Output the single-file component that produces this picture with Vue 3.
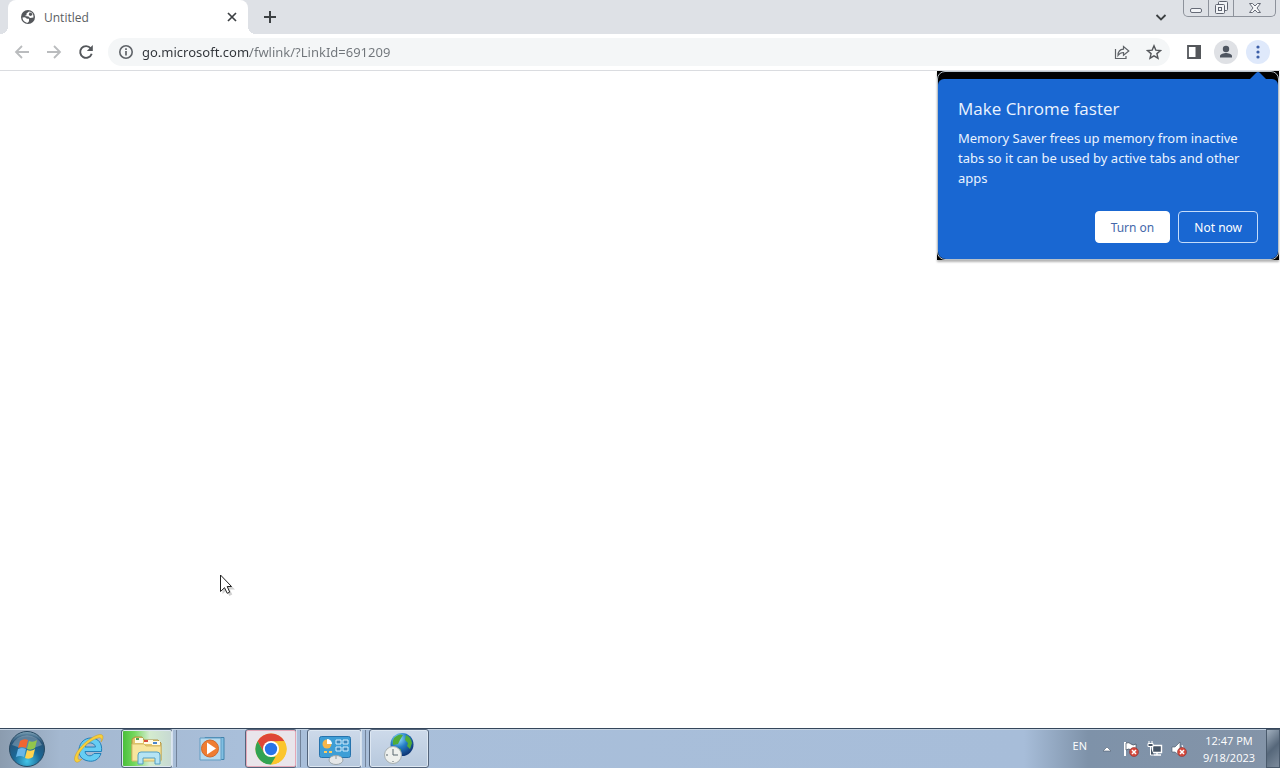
<script setup>
import { ref } from 'vue';

const address = ref('go.microsoft.com/fwlink/?LinkId=691209');
const showPromo = ref(true);

const closePromo = () => {
  showPromo.value = false;
}
</script>

<template>
  <div class="desktop">
    <header class="tabstrip">
      <div class="tab">
        <svg class="globe" width="16" height="16" viewBox="0 0 16 16">
          <circle cx="8" cy="8" r="7" fill="#54575b" />
          <path d="M2.500 8.500L5 8.300l2 1.500h2v2.400l-1.200 1.600C5 13.700 2.500 11.500 2.500 8.500zM9 2.600L6.500 4.500v1.700L4.500 7l4 .5L10 9l3.500-.5C13.800 5 12 3 9 2.600z" fill="#fff" />
          <path d="M9.500 3.500l2 .3 1 2.200-2 1-1.800-1z" fill="#54575b" />
        </svg>
        <span class="tab-title">Untitled</span>
        <button class="icon-btn" aria-label="Close tab">
          <svg width="16" height="16" viewBox="0 0 16 16"><path d="M4 4l8 8M12 4l-8 8" stroke="#3c4043" stroke-width="1.7" /></svg>
        </button>
      </div>
      <button class="icon-btn new-tab" aria-label="New tab">
        <svg width="16" height="16" viewBox="0 0 16 16"><path d="M8 2v12M2 8h12" stroke="#3c4043" stroke-width="2" /></svg>
      </button>
      <button class="icon-btn tab-search" aria-label="Search tabs">
        <svg width="16" height="16" viewBox="0 0 16 16"><path d="M3.5 6l4.5 4.5L12.5 6" fill="none" stroke="#3c4043" stroke-width="1.8" /></svg>
      </button>
      <div class="window-controls">
        <button aria-label="Minimize">
          <svg width="14" height="14" viewBox="0 0 14 14"><rect x="1.5" y="8.500" width="11" height="4" rx="1.5" fill="#f2f4f7" stroke="#666b77" /></svg>
        </button>
        <button aria-label="Restore">
          <svg width="14" height="15" viewBox="0 0 14 15" fill="#f2f4f7" stroke="#5f6470">
            <rect x="4.5" y="1.5" width="9" height="9" rx="1" />
            <rect x="1.5" y="4.5" width="9" height="9" rx="1" />
            <rect x="4.5" y="7.5" width="3" height="3" />
          </svg>
        </button>
        <button class="wide" aria-label="Close window">
          <svg width="14" height="15" viewBox="0 0 14 15"><path d="M1.5 3.500h3L7 6l2.500-2.500h3L9 8l3.500 4.500h-3L7 10l-2.500 2.500h-3L5 8z" fill="#f7f8fa" stroke="#666b77" /></svg>
        </button>
      </div>
    </header>

    <nav class="toolbar">
      <button class="icon-btn" aria-label="Back">
        <svg width="16" height="16" viewBox="0 0 16 16"><path d="M15 8H2M8 2L2 8l6 6" fill="none" stroke="#babcbe" stroke-width="1.8" /></svg>
      </button>
      <button class="icon-btn" aria-label="Forward">
        <svg width="16" height="16" viewBox="0 0 16 16"><path d="M1 8h13M8 2l6 6-6 6" fill="none" stroke="#babcbe" stroke-width="1.8" /></svg>
      </button>
      <button class="icon-btn" aria-label="Reload">
        <svg width="16" height="16" viewBox="0 0 16 16">
          <path d="M12.700 4.300A5.900 5.900 0 1 0 13.700 9.800" fill="none" stroke="#54575b" stroke-width="1.9" />
          <path d="M14.800 1v6H8.800z" fill="#54575b" />
        </svg>
      </button>
      <div class="omnibox">
        <svg width="16" height="16" viewBox="0 0 16 16">
          <circle cx="8" cy="8" r="6.200" fill="none" stroke="#5f6368" stroke-width="1.6" />
          <path d="M8 7v4.500M8 4.300v1.600" stroke="#5f6368" stroke-width="1.7" />
        </svg>
        <input v-model="address" type="text" aria-label="Address" spellcheck="false">
        <button class="icon-btn" aria-label="Share">
          <svg width="16" height="16" viewBox="0 0 16 16" fill="none" stroke="#5f6368" stroke-width="1.2">
            <path d="M1.500 5v9.500H12V12" />
            <path d="M4 11.500C4 7.500 6 5.500 9.500 5.200V2.500L14.800 7l-5.300 4.200V8.500C7 8.500 5.500 9.300 4 11.500z" />
          </svg>
        </button>
        <button class="icon-btn" aria-label="Bookmark">
          <svg width="16" height="16" viewBox="0 0 16 16"><path d="M8 1.800l1.800 4.300 4.700.4-3.600 3.100 1.100 4.600L8 11.800l-4 2.400 1.100-4.600-3.600-3.100 4.700-.4z" fill="none" stroke="#54575b" stroke-width="1.4" /></svg>
        </button>
      </div>
      <div class="actions">
        <button class="round-btn" aria-label="Side panel">
          <svg width="16" height="16" viewBox="0 0 16 16"><path d="M2 2h12v12H2z" fill="#fff" stroke="#54575b" stroke-width="1.8" /><path d="M9.500 1H15v14H9.500z" fill="#54575b" /></svg>
        </button>
        <button class="round-btn profile" aria-label="Profile">
          <svg width="16" height="16" viewBox="0 0 16 16" fill="#4f5661"><circle cx="8" cy="5" r="3.200" /><path d="M2 13.500V12c0-2 4-3 6-3s6 1 6 3v1.500z" /></svg>
        </button>
        <button class="round-btn menu" aria-label="Menu">
          <svg width="16" height="16" viewBox="0 0 16 16" fill="#3c5fa8"><circle cx="8" cy="3" r="1.600" /><circle cx="8" cy="8" r="1.600" /><circle cx="8" cy="13" r="1.600" /></svg>
        </button>
      </div>
    </nav>

    <main class="page">
      <section v-if="showPromo" class="promo">
        <svg class="promo-arrow" width="18" height="9" viewBox="0 0 18 9"><path d="M0 9l7-7q2-2 4 0l7 7z" fill="#1967d2" /></svg>
        <div class="promo-card">
          <h2>Make Chrome faster</h2>
          <p>Memory Saver frees up memory from inactive tabs so it can be used by active tabs and other apps</p>
          <div class="promo-actions">
            <button class="turn-on" @click="closePromo()">Turn on</button>
            <button class="not-now" @click="closePromo()">Not now</button>
          </div>
        </div>
      </section>
      <svg class="cursor" width="18" height="24" viewBox="0 0 18 24">
        <path d="M2.500 3v17l4-3.500 2.800 5.500 3-1.500-2.500-5H15z" fill="#000" opacity=".18" />
        <path d="M.5 1v16.500l4-3.800 2.700 5.600 2.500-1.200L7.200 12.500h4.300z" fill="#fff" stroke="#222" />
      </svg>
    </main>

    <footer class="taskbar">
      <button class="start" aria-label="Start">
        <svg width="38" height="38" viewBox="0 0 38 38">
          <defs>
            <radialGradient id="orb" cx=".5" cy=".85" r=".85">
              <stop offset="0" stop-color="#42c5e8" />
              <stop offset=".45" stop-color="#1b6795" />
              <stop offset=".8" stop-color="#275478" />
              <stop offset="1" stop-color="#86aabd" />
            </radialGradient>
          </defs>
          <circle cx="19" cy="19" r="17.500" fill="url(#orb)" stroke="#274962" />
          <path d="M4 15a16 15 0 0 1 30 0Q19 22 4 15z" fill="#fff" opacity=".25" />
          <path d="M12 11q4-3 8-1l-2 8q-4-2-8 0z" fill="#ef6531" />
          <path d="M21 11q4 2 8-1l-2 8q-4 3-8 1z" fill="#92c64c" />
          <path d="M10 19q4-2 8 0l-2 8q-4-2-8 0z" fill="#68b7e9" />
          <path d="M19 20q4 2 8-1l-2 8q-4 3-8 1z" fill="#ffd34e" />
        </svg>
      </button>
      <button class="task" aria-label="Internet Explorer">
        <svg width="34" height="34" viewBox="0 0 34 34">
          <path d="M29.500 19.500H13c.5 4.500 6 6 9 2h7c-2 6-7 8.500-12.500 7.500C9.500 28 6 23 7 17c1-7 6-11 12-11 7.500 0 11.500 5.500 10.500 13.500zM13 15h10.500c-1-5-9-6-10.500 0z" fill="#66cdf3" stroke="#2480b8" />
          <path d="M4 30C-1 27 7 14 18 7 25 2 31 1 31 5c0 2-1 4-2 5 1-3 0-5-3-4C17 8 5 21 6 26c0 2 2 2 4 1-2 2-4 4-6 3z" fill="#f8cf3b" stroke="#c99b25" stroke-width=".5" />
        </svg>
      </button>
      <button class="task open stacked explorer" aria-label="Windows Explorer">
        <svg width="34" height="34" viewBox="0 0 34 34">
          <path d="M2 7l3-2h7l2 3h14l3 3v17H2z" fill="#e5c66b" stroke="#b29140" />
          <path d="M5 6h8v5H5zM14 8h9v4h-9zM22 9h8v4h-8z" fill="#fffbe5" />
          <path d="M6 6h3v2H6z" fill="#4ca847" /><path d="M14 8h4v2h-4z" fill="#d84d3a" /><path d="M23 10h4v2h-4z" fill="#4885ce" />
          <path d="M2 12h12l2 2h15v15H2z" fill="#f8e59d" stroke="#d3b968" />
          <path d="M8 32v-9q0-3 3-3h16q3 0 3 3v9h-5v-6H13v6z" fill="#b5e4f4" stroke="#549fc2" />
        </svg>
      </button>
      <button class="task media" aria-label="Media Player">
        <svg width="34" height="34" viewBox="0 0 34 34">
          <path d="M10 5.500h19v22H10z" fill="#80bfe2" stroke="#4383ad" />
          <path d="M5 6h21v22H5z" fill="#b5daef" stroke="#629dc3" />
          <circle cx="15" cy="16.500" r="8.500" fill="#ef7d32" stroke="#d1692c" />
          <path d="M12 10.500l9 6-9 6z" fill="#fff" />
        </svg>
      </button>
      <button class="task open stacked chrome" aria-label="Google Chrome">
        <svg width="34" height="34" viewBox="0 0 34 34">
          <circle cx="17" cy="17" r="15.500" fill="#fbc52d" />
          <path d="M3.600 9.200A15.500 15.500 0 0 1 30.400 9.200H17L10.200 20.900z" fill="#df4637" />
          <path d="M3.600 9.200L10.200 20.900 17 24.800h6.800L17 32.500A15.500 15.500 0 0 1 3.600 9.200z" fill="#31a353" />
          <path d="M30.400 9.200A15.500 15.500 0 0 1 17 32.500L23.800 20.900 23.500 9.200z" fill="#fbc52d" />
          <circle cx="17" cy="17" r="8" fill="#fff" /><circle cx="17" cy="17" r="6.200" fill="#2874e8" />
        </svg>
      </button>
      <button class="task open stacked control" aria-label="Control Panel">
        <svg width="34" height="34" viewBox="0 0 34 34">
          <rect x="1.500" y="4.500" width="31" height="21" rx="2" fill="#3e9ed6" stroke="#2673ad" />
          <circle cx="9" cy="12" r="4.500" fill="#f6b64b" /><path d="M9 12V7a5 5 0 0 1 5 5z" fill="#fff" />
          <path d="M18 8h5v4h-5zM25 8h5v4h-5zM18 15h5v4h-5zM25 15h5v4h-5z" fill="#3b87bd" stroke="#d4efff" />
          <path d="M6 20h3M11 20h3" stroke="#ffcc5d" stroke-width="2" />
          <ellipse cx="18" cy="28" rx="7" ry="4.500" fill="#e5e7e8" stroke="#9ba5aa" /><path d="M18 24v3" stroke="#8b969c" />
        </svg>
      </button>
      <button class="task open region" aria-label="Date and Time">
        <svg width="34" height="34" viewBox="0 0 34 34">
          <defs><radialGradient id="earth" cx=".35" cy=".25" r=".75"><stop offset="0" stop-color="#9ae5ff" /><stop offset=".5" stop-color="#247cc6" /><stop offset="1" stop-color="#103978" /></radialGradient></defs>
          <circle cx="20" cy="12.500" r="11.500" fill="url(#earth)" />
          <path d="M12 6q5-5 9-3l-3 5-2 4-5 1q-1-4 1-7zM24 3q5 2 6 8l-2 6-3-3 1-3-3-3zM14 16l5 1-1 4q-4 0-6-3z" fill="#51ac38" />
          <circle cx="11" cy="23" r="8.500" fill="#eef0ed" stroke="#a7afb1" />
          <path d="M11 17v6h5M11 29v1M4 23h2" fill="none" stroke="#59676e" />
        </svg>
      </button>

      <div class="tray">
        <span class="lang">EN</span>
        <button aria-label="Show hidden icons"><svg width="16" height="16" viewBox="0 0 16 16"><path d="M4 10l4-4 4 4z" fill="#fff" stroke="#4e5c6e" stroke-width=".6" /></svg></button>
        <button aria-label="Action Center">
          <svg width="16" height="16" viewBox="0 0 16 16">
            <path d="M2 1v14" stroke="#fff" stroke-width="2" /><path d="M3 2q3-1 5 1t5 0v7q-3 1-5-1t-5 0z" fill="#fff" stroke="#3f4b59" stroke-width=".7" />
            <circle cx="11" cy="11" r="4.500" fill="#d54a3d" stroke="#8a3535" stroke-width=".6" /><path d="M9 9l4 4M13 9l-4 4" stroke="#fff" stroke-width="1.5" />
          </svg>
        </button>
        <button aria-label="Network">
          <svg width="16" height="16" viewBox="0 0 16 16" fill="#465566" stroke="#fff">
            <path d="M5.500 4.500h9v7h-9zM7 14h7M10 12v2" stroke-width="1.4" /><path d="M1 2.500h5v3H1zM2 0v2M5 0v2M3.500 6v8H7" />
          </svg>
        </button>
        <button aria-label="Volume">
          <svg width="16" height="16" viewBox="0 0 16 16">
            <path d="M1 6h3l5-5v14l-5-4H1z" fill="#fff" stroke="#465566" stroke-width=".6" /><path d="M11 4q2 3 1 6" stroke="#fff" fill="none" />
            <circle cx="11" cy="11" r="4.500" fill="#d54a3d" stroke="#8a3535" stroke-width=".6" /><path d="M9 9l4 4M13 9l-4 4" stroke="#fff" stroke-width="1.5" />
          </svg>
        </button>
        <time class="clock"><span>12:47 PM</span><span>9/18/2023</span></time>
        <button class="show-desktop" aria-label="Show desktop"></button>
      </div>
    </footer>
  </div>
</template>

<style>
body {
  margin: 0;
  background: #fff;
}
</style>

<style scoped>
.desktop {
  display: flex;
  flex-direction: column;
  height: 100vh;
  overflow: hidden;
  font-family: "Noto Sans", "Open Sans", sans-serif;
  font-size: 12px;
  color: #3c4043;
}

button {
  padding: 0;
  border: none;
  background: none;
  font: inherit;
}

svg {
  display: block;
  flex-shrink: 0;
}

.tabstrip {
  display: flex;
  align-items: center;
  height: 34px;
  padding: 0 4px 0 8px;
  background: #dee1e6;
}

.tab {
  position: relative;
  display: flex;
  align-items: center;
  gap: 8px;
  box-sizing: border-box;
  width: 240px;
  height: 34px;
  padding: 0 8px 0 12px;
  border-radius: 8px 8px 0 0;
  background: #fff;
}

.tab::before,
.tab::after {
  content: "";
  position: absolute;
  bottom: 0;
  width: 8px;
  height: 8px;
}

.tab::before {
  right: 100%;
  background: radial-gradient(circle at 0 0, #dee1e6 8px, #fff 8px);
}

.tab::after {
  left: 100%;
  background: radial-gradient(circle at 100% 0, #dee1e6 8px, #fff 8px);
}

.tab-title {
  flex: 1;
  font-family: "Open Sans", sans-serif;
  color: #5a5e62;
}

.new-tab {
  margin-left: 14px;
}

.tab-search {
  margin-left: auto;
}

.window-controls {
  display: flex;
  align-self: flex-start;
  box-sizing: border-box;
  height: 17px;
  margin-left: 14px;
  border: 1px solid #8d929b;
  border-top: none;
  border-radius: 0 0 5px 5px;
}

.window-controls button {
  display: flex;
  justify-content: center;
  width: 25px;
  border-right: 1px solid #8d929b;
}

.window-controls .wide {
  width: 41px;
  border-right: none;
}

.toolbar {
  display: flex;
  align-items: center;
  gap: 16px;
  height: 36px;
  padding: 0 10px 0 14px;
  border-bottom: 1px solid #dadce0;
  background: #fff;
}

.omnibox {
  display: flex;
  flex: 1;
  align-items: center;
  gap: 16px;
  height: 28px;
  padding: 0 8px 0 10px;
  margin-left: -2px;
  border-radius: 14px;
  background: #f4f6f7;
}

.omnibox input {
  flex: 1;
  min-width: 0;
  height: 24px;
  padding: 0;
  margin-left: -8px;
  border: none;
  outline: none;
  background: linear-gradient(to right, #303439 108px, #70757a 108px);
  -webkit-background-clip: text;
  background-clip: text;
  color: transparent;
  caret-color: #303439;
  font: inherit;
  font-size: 13px;
}

.actions {
  display: flex;
  gap: 8px;
  margin-left: -4px;
}

.round-btn {
  display: flex;
  align-items: center;
  justify-content: center;
  width: 24px;
  height: 24px;
  border-radius: 50%;
}

.profile {
  background: #dfe1e5;
}

.menu {
  background: #dfe9fb;
}

.page {
  position: relative;
  flex: 1;
  min-height: 0;
}

.promo {
  position: absolute;
  top: 0;
  right: 1px;
  width: 342px;
  box-sizing: border-box;
  padding: 8px 1px 1px;
  background: #000;
  box-shadow: 0 2px 2px #b5b5b5;
}

.promo::before {
  content: "";
  position: absolute;
  inset: 0;
  border: 1px solid #b9c1c8;
  border-radius: 8px;
}

.promo-arrow {
  position: absolute;
  top: 0;
  right: 12px;
}

.promo-card {
  position: relative;
  padding: 18px 20px 16px;
  border-radius: 6px 6px 8px 8px;
  background: #1967d2;
  color: #eaf3ff;
}

.promo-card h2 {
  margin: 0 0 7px;
  font-family: "Open Sans", sans-serif;
  font-size: 17px;
  font-weight: 400;
  line-height: 24px;
}

.promo-card p {
  margin: 0;
  font-size: 13px;
  line-height: 20px;
}

.promo-actions {
  display: flex;
  justify-content: flex-end;
  gap: 8px;
  margin-top: 23px;
}

.promo-actions button {
  height: 32px;
  padding: 0 15px;
  border: 1px solid #c5dcfa;
  border-radius: 4px;
  color: #fff;
}

.promo-actions .turn-on {
  border-color: #fff;
  background: #fff;
  color: #4468aa;
}

.cursor {
  position: absolute;
  top: 503px;
  left: 220px;
}

.taskbar {
  display: flex;
  align-items: center;
  box-sizing: border-box;
  height: 40px;
  padding-left: 8px;
  border-top: 1px solid #35465b;
  background: linear-gradient(to right, #8b9caf 0, #a4b8d0 60px, #a9bfda 240px, #a7bdd9 80%, #7e92a9 85%, #8494a8 100%);
  box-shadow: inset 0 1px #c6d4e3;
}

.start {
  width: 38px;
  height: 38px;
}

.task {
  display: flex;
  align-items: center;
  justify-content: center;
  box-sizing: border-box;
  width: 52px;
  height: 39px;
  margin-left: 17px;
}

.open {
  border: 1px solid #53647b;
  border-radius: 3px;
  background: linear-gradient(to bottom, #cddaea, #b7c8dd);
  box-shadow: inset 0 0 0 1px #dde7f2;
}

.stacked {
  position: relative;
}

.stacked::after {
  content: "";
  position: absolute;
  top: 0;
  bottom: 0;
  left: 100%;
  width: 3px;
  border-right: 1px solid #72839a;
  border-left: 1px solid #d5e1ed;
}

.explorer {
  margin-left: 6px;
  background: linear-gradient(to right, #46bd38 0, #75d85e 25%, #d4eccf 55%, #c6d8d3 100%);
}

.media {
  margin-left: 13px;
}

.chrome {
  margin-left: 7px;
  background: #e9e5eb;
  box-shadow: inset 0 0 0 1px #e5a7b7;
}

.control {
  width: 55px;
  margin-left: 10px;
}

.region {
  width: 60px;
  margin-left: 7px;
}

.tray {
  display: flex;
  align-items: center;
  gap: 8px;
  height: 100%;
  margin-left: auto;
  font-family: "Open Sans", sans-serif;
  color: #fff;
}

.lang {
  margin-right: 4px;
  font-size: 11px;
  line-height: 24px;
  margin-bottom: 6px;
}

.clock {
  display: flex;
  flex-direction: column;
  width: 68px;
  text-align: center;
  font-size: 11px;
  line-height: 17px;
}

.show-desktop {
  width: 14px;
  height: 100%;
  margin-left: -5px;
  border: 1px solid #4a5a6c;
  background: linear-gradient(135deg, #a1afbe, #56677a 50%, #7c8b9c);
}
</style>
